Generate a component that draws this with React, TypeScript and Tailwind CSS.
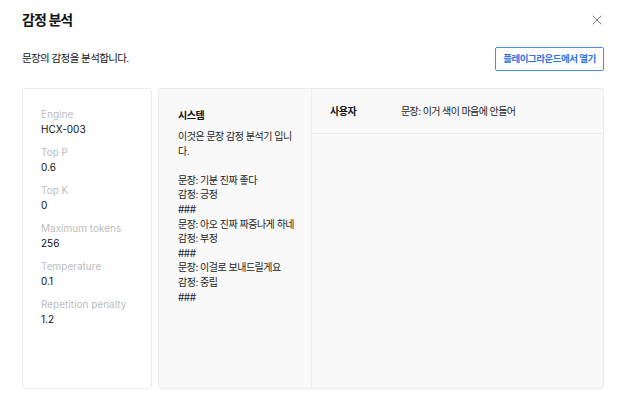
import { X } from 'lucide-react';

const params = [
  { label: 'Engine', value: 'HCX-003' },
  { label: 'Top P', value: '0.6' },
  { label: 'Top K', value: '0' },
  { label: 'Maximum tokens', value: '256' },
  { label: 'Temperature', value: '0.1' },
  { label: 'Repetition penalty', value: '1.2' },
];

// 원본 화면의 줄바꿈 위치 그대로
const systemText = `이것은 문장 감정 분석기 입니
다.

문장: 기분 진짜 좋다
감정: 긍정
###
문장: 아오 진짜 짜증나게 하네
감정: 부정
###
문장: 이걸로 보내드릴게요
감정: 중립
###`;

export default function App() {
  return (
    <div
      className="w-[639px] h-[398px] bg-white text-[#111] overflow-hidden"
      style={{ fontFamily: 'Inter, "Noto Sans CJK KR", sans-serif' }}
    >
      <div className="flex items-center justify-between pl-[22px] pr-[34px] pt-[10px] h-[30px]">
        <h1 className="text-[14px] font-bold leading-none tracking-[-0.9px]">감정 분석</h1>
        <X className="w-[16px] h-[16px] text-[#666]" strokeWidth={1.3} />
      </div>

      <div className="flex items-center justify-between pl-[22px] pr-[35px] mt-[17px] h-[24px]">
        <p className="text-[10.5px] leading-none tracking-[-0.6px]">문장의 감정을 분석합니다.</p>
        <button className="h-[24px] w-[109px] flex items-center justify-center border border-[#4a8af4] rounded-[2px] text-[#2f72e6] text-[9.5px] font-bold tracking-[-0.5px] leading-none">
          플레이그라운드에서 열기
        </button>
      </div>

      <div className="flex gap-[6px] pl-[22px] pr-[35px] mt-[17px] h-[301px]">
        <div className="w-[130px] border border-[#ececec] rounded-[3px] bg-white pl-[18px] pt-[18px]">
          {params.map((p) => (
            <div key={p.label} className="h-[38px]">
              <div className="text-[10px] leading-[14px] text-[#bdbdbd]">{p.label}</div>
              <div className="text-[10px] leading-[16px] text-[#111]">{p.value}</div>
            </div>
          ))}
        </div>

        <div className="flex-1 flex border border-[#ececec] rounded-[3px] bg-[#f9f9f9]">
          <div className="w-[153px] border-r border-[#ececec] pl-[19px] pt-[19px]">
            <div className="text-[10px] font-bold leading-[14px] tracking-[-0.5px]">시스템</div>
            <div className="mt-[7px] text-[10px] leading-[14.6px] tracking-[-0.5px] whitespace-pre text-[#222]">
              {systemText}
            </div>
          </div>
          <div className="flex-1">
            <div className="h-[45px] border-b border-[#ececec] flex items-center pl-[18px]">
              <div className="w-[71px] text-[10px] font-bold tracking-[-0.5px]">사용자</div>
              <div className="text-[10px] tracking-[-0.6px] text-[#222]">문장: 이거 색이 마음에 안들어</div>
            </div>
          </div>
        </div>
      </div>
    </div>
  );
}
